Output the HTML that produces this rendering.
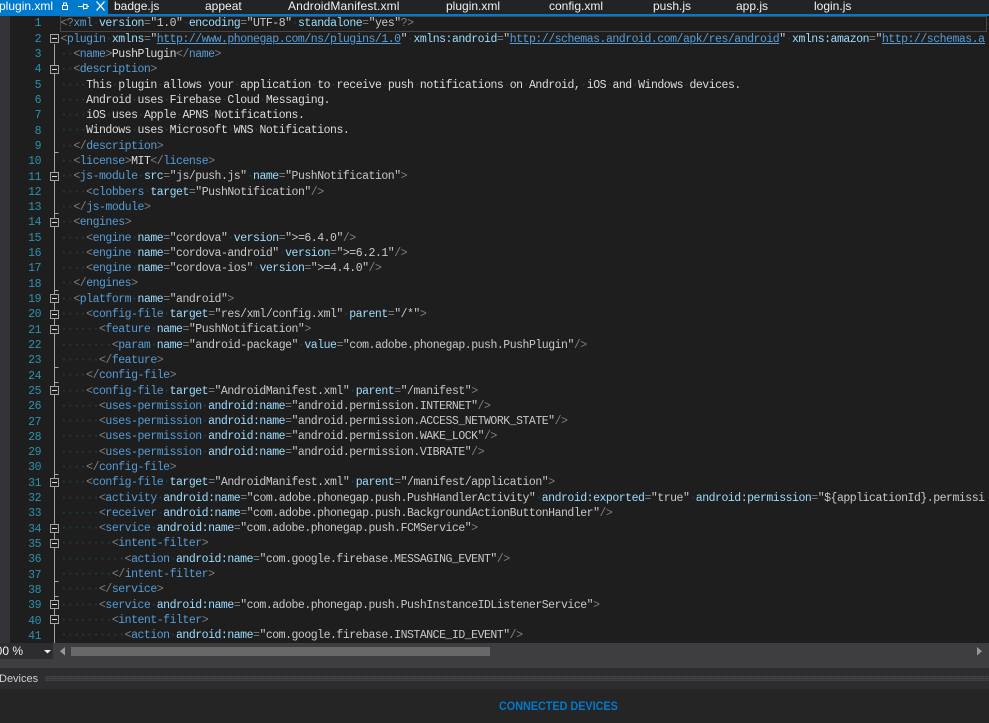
<!DOCTYPE html>
<html><head><meta charset="utf-8"><style>
html,body{margin:0;padding:0;width:989px;height:723px;overflow:hidden;background:#252526}
body{position:relative;font-family:"Liberation Sans",sans-serif}
.abs{position:absolute}
.tab{position:absolute;top:-1px;font-size:12px;line-height:15px;color:#f1f1f1;white-space:nowrap}
#code,#nums{font:11.5px/15.31px "Liberation Mono",monospace;letter-spacing:-.485px}
#code{position:absolute;left:60.5px;top:.4px;color:#dcdcdc;width:924px;height:627px;overflow:hidden}
#code div{height:15.31px;white-space:pre}
#nums{position:absolute;left:10px;width:31px;top:.4px;height:627px;overflow:hidden;text-align:right;color:#2b91af;white-space:pre}
i{font-style:normal;color:#1c4552}
b{font-weight:normal;color:#808080}
em{font-style:normal;color:#569cd6}
a{color:#9cdcfe}
s{text-decoration:none;color:#c8c8c8}
u{color:#569cd6;text-decoration:underline}
</style></head><body>
<div class="abs" style="left:0;top:0;width:989px;height:14px;background:#232325"></div>
<div class="abs" style="left:0;top:0;width:108px;height:14px;background:#007acc"></div>
<div class="abs" style="left:0;top:14px;width:989px;height:2px;background:#007acc"></div>
<div class="tab" style="left:-1px;color:#fff">plugin.xml</div>
<svg class="abs" style="left:58px;top:0" width="50" height="14" fill="none" stroke="#fff">
<path d="M4.500 5.500h5v4h-5zM5.500 5V3h3v2" stroke-width="1"/>
<path d="M20 6.500h5M25.500 3.500v6M25 4.500h4v4h-4M29 6.500h2" stroke-width="1"/>
<path d="M38.500 1.500l8 9M46.500 1.500l-8 9" stroke-width="1.300"/>
</svg>
<div class="tab" style="left:114px">badge.js</div>
<div class="tab" style="left:205px">appeat</div>
<div class="tab" style="left:288px;letter-spacing:.15px">AndroidManifest.xml</div>
<div class="tab" style="left:446px">plugin.xml</div>
<div class="tab" style="left:549px">config.xml</div>
<div class="tab" style="left:653px">push.js</div>
<div class="tab" style="left:736px">app.js</div>
<div class="tab" style="left:814px">login.js</div>

<div class="abs" style="left:0;top:16px;width:989px;height:627px;background:#1e1e1e"></div>
<div class="abs" style="left:0;top:16px;width:10px;height:627px;background:#333337"></div>
<div class="abs" style="left:60px;top:16px;width:925px;height:14px;border:1px solid #464646;background:#1e1e1e"></div>
<div class="abs" style="left:0;top:16px;width:989px;height:627px;overflow:hidden">
<div id="nums">1
2
3
4
5
6
7
8
9
10
11
12
13
14
15
16
17
18
19
20
21
22
23
24
25
26
27
28
29
30
31
32
33
34
35
36
37
38
39
40
41</div>
<svg class="abs" style="left:48px;top:-16px" width="12" height="643" fill="none" stroke="#a5a5a5" shape-rendering="crispEdges">
<path d="M6.500 44V643"/>
<path d="M6.500 152.500h4M6.500 213.500h4M6.500 290.500h4M6.500 367.500h4M6.500 382.500h4M6.500 474.500h4M6.500 581.500h4M6.500 596.500h4"/>
<g fill="#1e1e1e">
<rect x="2.500" y="34.500" width="8" height="8"/><rect x="2.500" y="65.500" width="8" height="8"/><rect x="2.500" y="172.500" width="8" height="8"/><rect x="2.500" y="218.500" width="8" height="8"/><rect x="2.500" y="294.500" width="8" height="8"/><rect x="2.500" y="310.500" width="8" height="8"/><rect x="2.500" y="325.500" width="8" height="8"/><rect x="2.500" y="386.500" width="8" height="8"/><rect x="2.500" y="478.500" width="8" height="8"/><rect x="2.500" y="524.500" width="8" height="8"/><rect x="2.500" y="539.500" width="8" height="8"/><rect x="2.500" y="600.500" width="8" height="8"/><rect x="2.500" y="615.500" width="8" height="8"/>
</g>
<path stroke="#dcdcdc" d="M4 38.500h5M4 69.500h5M4 176.500h5M4 222.500h5M4 298.500h5M4 314.500h5M4 329.500h5M4 390.500h5M4 482.500h5M4 528.500h5M4 543.500h5M4 604.500h5M4 619.500h5"/>
</svg>
<div id="code">
<div><b>&lt;?</b><em>xml</em><i>·</i><a>version</a><b>=</b><s>"1.0"</s><i>·</i><a>encoding</a><b>=</b><s>"UTF-8"</s><i>·</i><a>standalone</a><b>=</b><s>"yes"</s><b>?&gt;</b></div>
<div><b>&lt;</b><em>plugin</em><i>·</i><a>xmlns</a><b>=</b><s>"</s><u>http://www.phonegap.com/ns/plugins/1.0</u><s>"</s><i>·</i><a>xmlns:android</a><b>=</b><s>"</s><u>http://schemas.android.com/apk/res/android</u><s>"</s><i>·</i><a>xmlns:amazon</a><b>=</b><s>"</s><u>http://schemas.android.com/apk/lib/amazon</u></div>
<div><i>··</i><b>&lt;</b><em>name</em><b>&gt;</b>PushPlugin<b>&lt;/</b><em>name</em><b>&gt;</b></div>
<div><i>··</i><b>&lt;</b><em>description</em><b>&gt;</b></div>
<div><i>····</i>This<i>·</i>plugin<i>·</i>allows<i>·</i>your<i>·</i>application<i>·</i>to<i>·</i>receive<i>·</i>push<i>·</i>notifications<i>·</i>on<i>·</i>Android,<i>·</i>iOS<i>·</i>and<i>·</i>Windows<i>·</i>devices.</div>
<div><i>····</i>Android<i>·</i>uses<i>·</i>Firebase<i>·</i>Cloud<i>·</i>Messaging.</div>
<div><i>····</i>iOS<i>·</i>uses<i>·</i>Apple<i>·</i>APNS<i>·</i>Notifications.</div>
<div><i>····</i>Windows<i>·</i>uses<i>·</i>Microsoft<i>·</i>WNS<i>·</i>Notifications.</div>
<div><i>··</i><b>&lt;/</b><em>description</em><b>&gt;</b></div>
<div><i>··</i><b>&lt;</b><em>license</em><b>&gt;</b>MIT<b>&lt;/</b><em>license</em><b>&gt;</b></div>
<div><i>··</i><b>&lt;</b><em>js-module</em><i>·</i><a>src</a><b>=</b><s>"js/push.js"</s><i>·</i><a>name</a><b>=</b><s>"PushNotification"</s><b>&gt;</b></div>
<div><i>····</i><b>&lt;</b><em>clobbers</em><i>·</i><a>target</a><b>=</b><s>"PushNotification"</s><b>/&gt;</b></div>
<div><i>··</i><b>&lt;/</b><em>js-module</em><b>&gt;</b></div>
<div><i>··</i><b>&lt;</b><em>engines</em><b>&gt;</b></div>
<div><i>····</i><b>&lt;</b><em>engine</em><i>·</i><a>name</a><b>=</b><s>"cordova"</s><i>·</i><a>version</a><b>=</b><s>"&gt;=6.4.0"</s><b>/&gt;</b></div>
<div><i>····</i><b>&lt;</b><em>engine</em><i>·</i><a>name</a><b>=</b><s>"cordova-android"</s><i>·</i><a>version</a><b>=</b><s>"&gt;=6.2.1"</s><b>/&gt;</b></div>
<div><i>····</i><b>&lt;</b><em>engine</em><i>·</i><a>name</a><b>=</b><s>"cordova-ios"</s><i>·</i><a>version</a><b>=</b><s>"&gt;=4.4.0"</s><b>/&gt;</b></div>
<div><i>··</i><b>&lt;/</b><em>engines</em><b>&gt;</b></div>
<div><i>··</i><b>&lt;</b><em>platform</em><i>·</i><a>name</a><b>=</b><s>"android"</s><b>&gt;</b></div>
<div><i>····</i><b>&lt;</b><em>config-file</em><i>·</i><a>target</a><b>=</b><s>"res/xml/config.xml"</s><i>·</i><a>parent</a><b>=</b><s>"/*"</s><b>&gt;</b></div>
<div><i>······</i><b>&lt;</b><em>feature</em><i>·</i><a>name</a><b>=</b><s>"PushNotification"</s><b>&gt;</b></div>
<div><i>········</i><b>&lt;</b><em>param</em><i>·</i><a>name</a><b>=</b><s>"android-package"</s><i>·</i><a>value</a><b>=</b><s>"com.adobe.phonegap.push.PushPlugin"</s><b>/&gt;</b></div>
<div><i>······</i><b>&lt;/</b><em>feature</em><b>&gt;</b></div>
<div><i>····</i><b>&lt;/</b><em>config-file</em><b>&gt;</b></div>
<div><i>····</i><b>&lt;</b><em>config-file</em><i>·</i><a>target</a><b>=</b><s>"AndroidManifest.xml"</s><i>·</i><a>parent</a><b>=</b><s>"/manifest"</s><b>&gt;</b></div>
<div><i>······</i><b>&lt;</b><em>uses-permission</em><i>·</i><a>android:name</a><b>=</b><s>"android.permission.INTERNET"</s><b>/&gt;</b></div>
<div><i>······</i><b>&lt;</b><em>uses-permission</em><i>·</i><a>android:name</a><b>=</b><s>"android.permission.ACCESS_NETWORK_STATE"</s><b>/&gt;</b></div>
<div><i>······</i><b>&lt;</b><em>uses-permission</em><i>·</i><a>android:name</a><b>=</b><s>"android.permission.WAKE_LOCK"</s><b>/&gt;</b></div>
<div><i>······</i><b>&lt;</b><em>uses-permission</em><i>·</i><a>android:name</a><b>=</b><s>"android.permission.VIBRATE"</s><b>/&gt;</b></div>
<div><i>····</i><b>&lt;/</b><em>config-file</em><b>&gt;</b></div>
<div><i>····</i><b>&lt;</b><em>config-file</em><i>·</i><a>target</a><b>=</b><s>"AndroidManifest.xml"</s><i>·</i><a>parent</a><b>=</b><s>"/manifest/application"</s><b>&gt;</b></div>
<div><i>······</i><b>&lt;</b><em>activity</em><i>·</i><a>android:name</a><b>=</b><s>"com.adobe.phonegap.push.PushHandlerActivity"</s><i>·</i><a>android:exported</a><b>=</b><s>"true"</s><i>·</i><a>android:permission</a><b>=</b><s>"${applicationId}.permission.PushHandlerActivity"</s></div>
<div><i>······</i><b>&lt;</b><em>receiver</em><i>·</i><a>android:name</a><b>=</b><s>"com.adobe.phonegap.push.BackgroundActionButtonHandler"</s><b>/&gt;</b></div>
<div><i>······</i><b>&lt;</b><em>service</em><i>·</i><a>android:name</a><b>=</b><s>"com.adobe.phonegap.push.FCMService"</s><b>&gt;</b></div>
<div><i>········</i><b>&lt;</b><em>intent-filter</em><b>&gt;</b></div>
<div><i>··········</i><b>&lt;</b><em>action</em><i>·</i><a>android:name</a><b>=</b><s>"com.google.firebase.MESSAGING_EVENT"</s><b>/&gt;</b></div>
<div><i>········</i><b>&lt;/</b><em>intent-filter</em><b>&gt;</b></div>
<div><i>······</i><b>&lt;/</b><em>service</em><b>&gt;</b></div>
<div><i>······</i><b>&lt;</b><em>service</em><i>·</i><a>android:name</a><b>=</b><s>"com.adobe.phonegap.push.PushInstanceIDListenerService"</s><b>&gt;</b></div>
<div><i>········</i><b>&lt;</b><em>intent-filter</em><b>&gt;</b></div>
<div><i>··········</i><b>&lt;</b><em>action</em><i>·</i><a>android:name</a><b>=</b><s>"com.google.firebase.INSTANCE_ID_EVENT"</s><b>/&gt;</b></div>
</div>
</div>

<div class="abs" style="left:0;top:643px;width:989px;height:25px;background:#3e3e42"></div>
<div class="abs" style="left:0;top:643px;width:53px;height:16px;background:#2d2d30;overflow:hidden;font-size:12px;line-height:16px;color:#f1f1f1;white-space:nowrap;text-indent:-11px">100 %</div>
<svg class="abs" style="left:44px;top:649px" width="8" height="5"><path d="M0 1h7L3.500 4.500z" fill="#f1f1f1"/></svg>
<svg class="abs" style="left:59px;top:646px" width="8" height="11"><path d="M6 1V9.500L1 5.250z" fill="#999"/></svg>
<div class="abs" style="left:71px;top:647px;width:419px;height:9px;background:#686868"></div>
<svg class="abs" style="left:976px;top:646px" width="8" height="11"><path d="M1 1V9.500L6 5.250z" fill="#999"/></svg>

<div class="abs" style="left:0;top:668px;width:989px;height:21px;background:#2d2d30"></div>
<div class="abs" style="left:-1px;top:671px;font-size:11px;line-height:16px;color:#d0d0d0">Devices</div>
<div class="abs" style="left:45px;top:676px;width:944px;height:5px;background-image:radial-gradient(circle at .75px .75px,#46464a .75px,transparent .8px);background-size:2px 2px"></div>
<div class="abs" style="left:499px;top:698px;font-size:12px;line-height:16px;font-weight:bold;color:#007acc;white-space:nowrap;transform:scaleX(.9);transform-origin:0 0">CONNECTED DEVICES</div>
</body></html>
